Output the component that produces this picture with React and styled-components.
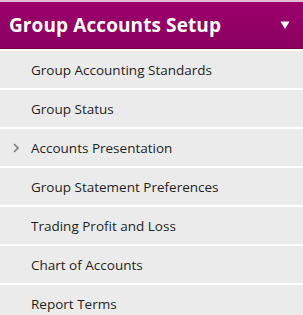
import React from "react";
import styled, { createGlobalStyle } from "styled-components";

const GlobalStyle = createGlobalStyle`
  html, body {
    margin: 0;
    padding: 0;
    background: #ffffff;
  }
  body {
    font-family: "Open Sans", "Noto Sans", sans-serif;
  }
`;

const items = [
  { label: "Group Accounting Standards" },
  { label: "Group Status" },
  { label: "Accounts Presentation", hasChildren: true },
  { label: "Group Statement Preferences" },
  { label: "Trading Profit and Loss" },
  { label: "Chart of Accounts" },
  { label: "Report Terms" },
];

function App() {
  return (
    <>
      <GlobalStyle />
      <Panel>
        <Header>
          <Title>Group Accounts Setup</Title>
          <Caret viewBox="0 0 10 10" aria-hidden="true">
            <path d="M0.5 1.5 H9.5 L5 9 Z" fill="#ffffff" />
          </Caret>
        </Header>
        <Menu>
          {items.map((item) => (
            <Row key={item.label}>
              <Chevron $visible={item.hasChildren}>
                <svg viewBox="0 0 8 10" width="8" height="10" aria-hidden="true">
                  <path
                    d="M2 1 L6 5 L2 9"
                    fill="none"
                    stroke="#7a7a7a"
                    strokeWidth="1.6"
                  />
                </svg>
              </Chevron>
              <Label>{item.label}</Label>
            </Row>
          ))}
        </Menu>
      </Panel>
    </>
  );
}

const Panel = styled.div`
  width: 303px;
  height: 315px;
  overflow: hidden;
  background: #ffffff;
  border-top: 2px solid #e3b8d4;
  box-sizing: border-box;
`;

const Header = styled.div`
  height: 46px;
  display: flex;
  align-items: center;
  justify-content: space-between;
  padding: 0 13px 0 9px;
  background: linear-gradient(#9c006c, #8a005f);
  border-bottom: 1px solid #6e004b;
`;

const Title = styled.span`
  color: #ffffff;
  font-size: 19px;
  font-weight: 700;
  letter-spacing: 0.1px;
`;

const Caret = styled.svg`
  width: 10px;
  height: 10px;
`;

const Menu = styled.div`
  display: flex;
  flex-direction: column;
  gap: 2px;
  padding-top: 2px;
`;

const Row = styled.div`
  height: 37px;
  flex-shrink: 0;
  display: flex;
  align-items: center;
  background: #ebebeb;
  padding-left: 12px;
`;

const Chevron = styled.span`
  width: 19px;
  display: flex;
  align-items: center;
  visibility: ${(p) => (p.$visible ? "visible" : "hidden")};
`;

const Label = styled.span`
  font-size: 13.5px;
  color: #1f1f1f;
`;

export default App;
